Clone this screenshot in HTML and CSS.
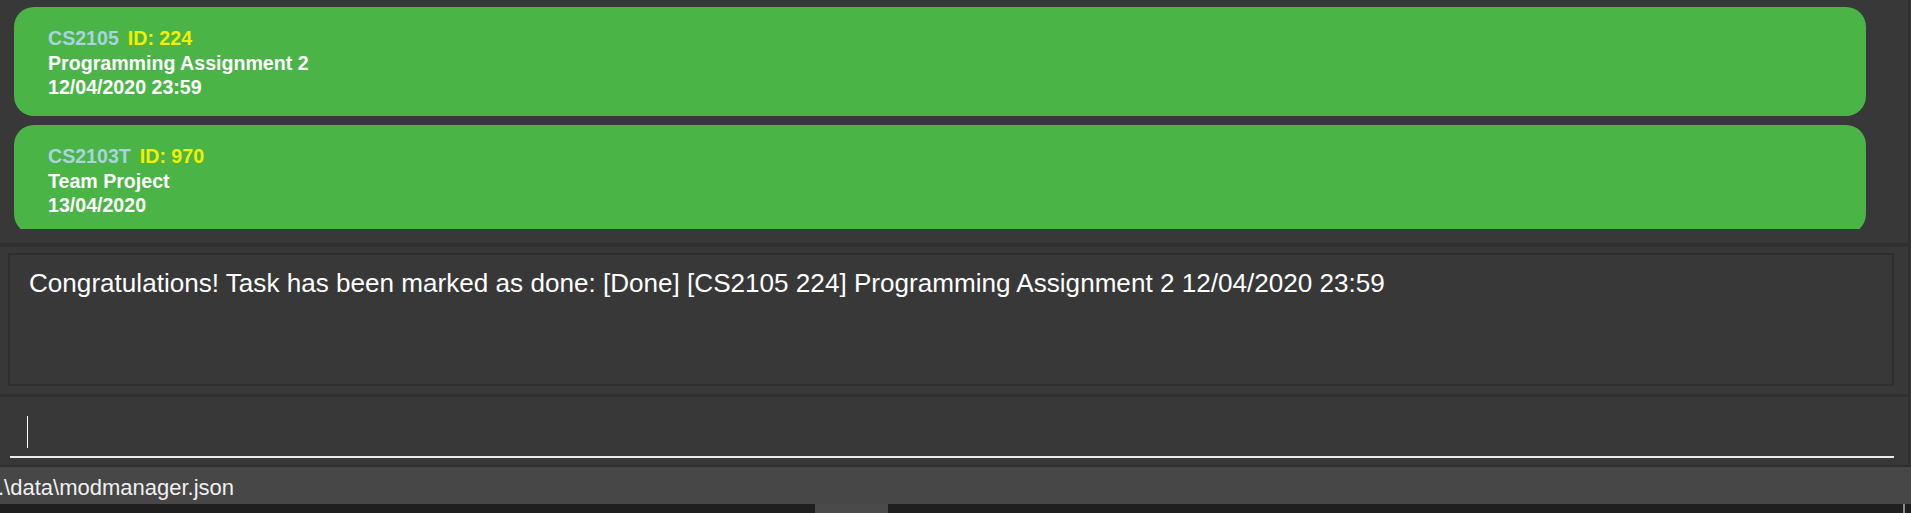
FILE: index.html
```html
<!DOCTYPE html>
<html lang="en">
<head>
<meta charset="utf-8">
<title>ModManager</title>
<link rel="stylesheet" href="styles.css">
</head>
<body>
<div class="app">
  <div class="main">
    <div class="list">
      <div class="viewport">
        <div class="card">
          <div class="card-head"><span class="code">CS2105</span><span class="id">ID: 224</span></div>
          <div class="line">Programming Assignment 2</div>
          <div class="line">12/04/2020 23:59</div>
        </div>
        <div class="card">
          <div class="card-head"><span class="code">CS2103T</span><span class="id">ID: 970</span></div>
          <div class="line">Team Project</div>
          <div class="line">13/04/2020</div>
        </div>
      </div>
    </div>
    <div class="sep sep-a"></div>
    <div class="result-panel">
      <div class="result-box">Congratulations! Task has been marked as done: [Done] [CS2105 224] Programming Assignment 2 12/04/2020 23:59</div>
    </div>
    <div class="sep sep-b"></div>
    <div class="command-panel">
      <div class="command-field"><span class="caret"></span></div>
    </div>
  </div>
  <div class="sep sep-c"></div>
  <div class="status">.\data\modmanager.json</div>
  <div class="taskbar"><span class="tb-block"></span><span class="tb-tick"></span></div>
</div>
</body>
</html>
```
FILE: styles.css
```css
* { box-sizing: border-box; }
html, body { margin: 0; padding: 0; }
body {
  background: #383838;
  font-family: "Liberation Sans", Arial, sans-serif;
  width: 1911px;
  height: 513px;
  overflow: hidden;
}
.app { display: flex; flex-direction: column; height: 513px; }
.main {
  border-right: 2px solid #303030;
  margin-right: 1px;
  display: flex;
  flex-direction: column;
}
.list {
  height: 243px;
  padding: 7px 42px 14px 14px;
}
.viewport {
  height: 222px;
  overflow: hidden;
}
.card {
  background: #4ab546;
  border-radius: 20px;
  height: 109px;
  margin-bottom: 9px;
  padding: 19px 20px 0 34px;
  font-weight: bold;
  font-size: 19.6px;
  line-height: 24.5px;
  color: #ffffff;
}
.card-head { display: flex; gap: 9px; }
.code { color: #a9d3df; }
.id { color: #f2f000; }
.line { white-space: nowrap; }
.sep { flex: none; }
.sep-a { height: 4px; background: #303030; }
.sep-b { height: 3px; background: #303030; }
.sep-c { height: 2px; background: #2e2e2e; }
.result-panel {
  height: 147px;
  padding: 6px 14px 8px 8px;
}
.result-box {
  height: 133px;
  border: 2px solid #2e2e2e;
  padding: 13px 19px 12px 19px;
  color: #ffffff;
  font-size: 26.1px;
  line-height: 30px;
  white-space: nowrap;
}
.command-panel {
  height: 68px;
  padding: 19px 14px 7px 10px;
}
.command-field {
  height: 42px;
  padding-left: 17px;
  border-bottom: 2px solid #ececec;
}
.caret {
  display: block;
  width: 1px;
  height: 32px;
  background: #ffffff;
}
.status {
  height: 37px;
  background: #474747;
  color: #f0f0f0;
  font-size: 22px;
  line-height: 25px;
  padding: 8px 0 4px 0;
  margin-left: -2px;
  white-space: nowrap;
}
.taskbar {
  height: 9px;
  background: #1f1f1f;
  display: flex;
}
.tb-block {
  margin-left: 815px;
  width: 73px;
  height: 9px;
  background: #4a4a4a;
}
.tb-tick {
  margin-left: 1015px;
  width: 2px;
  height: 9px;
  background: #8c8c8c;
}
```
